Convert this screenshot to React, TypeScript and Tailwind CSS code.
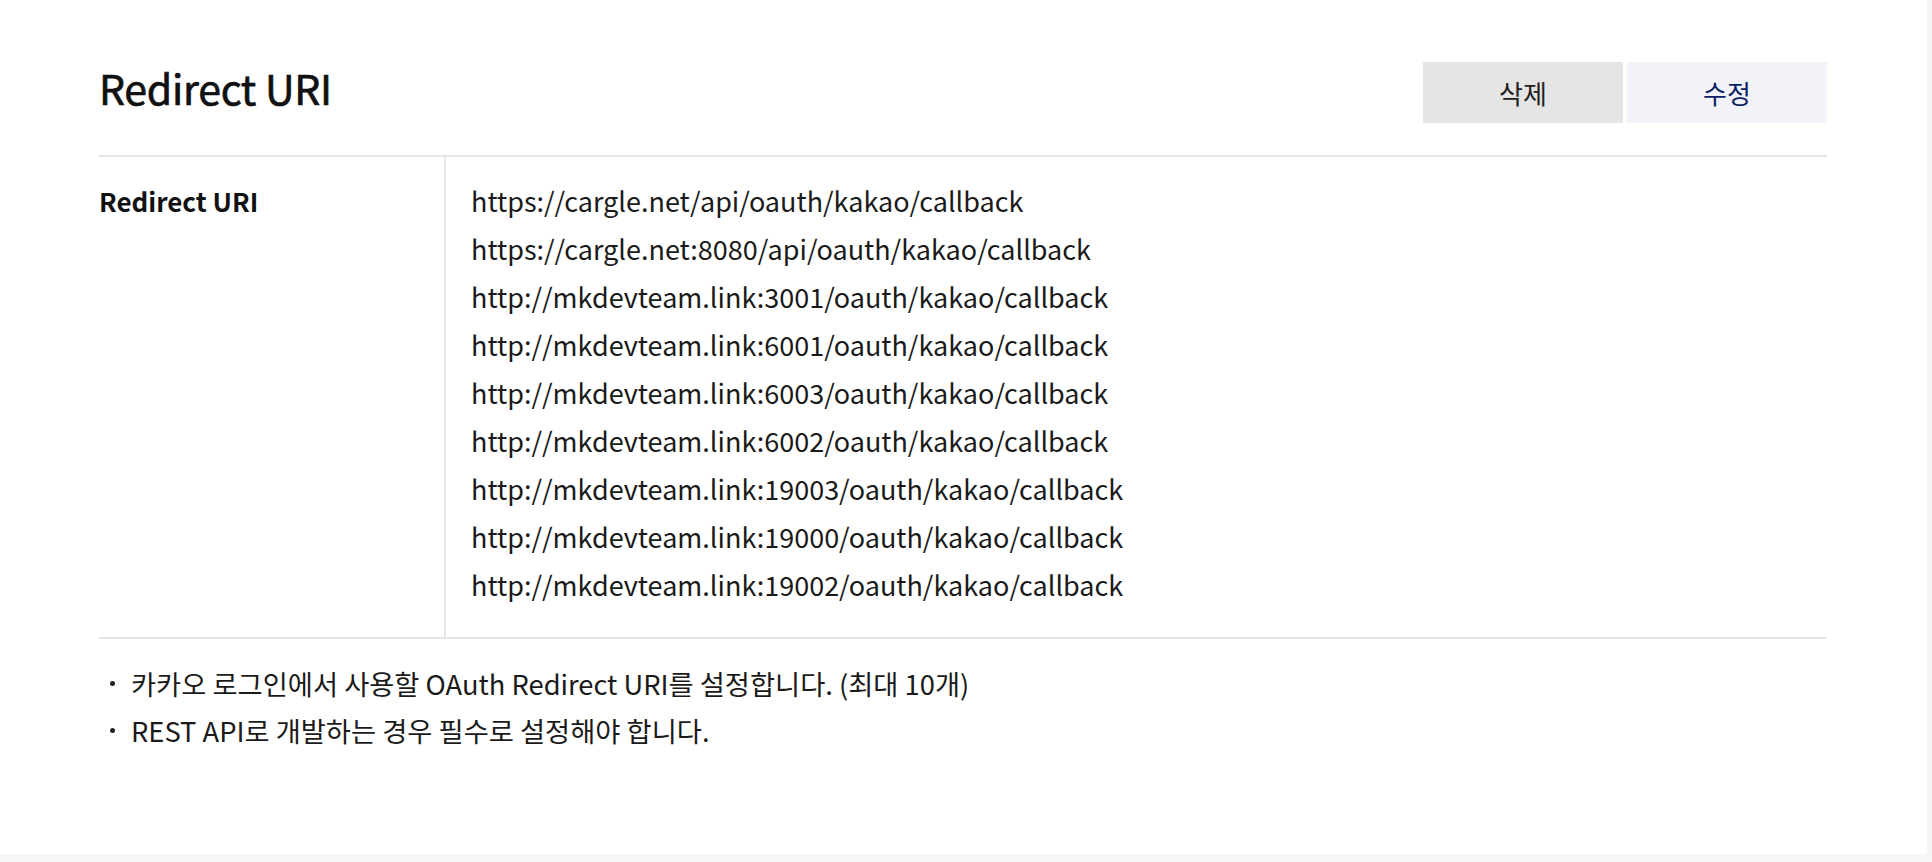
const uris = [
  'https://cargle.net/api/oauth/kakao/callback',
  'https://cargle.net:8080/api/oauth/kakao/callback',
  'http://mkdevteam.link:3001/oauth/kakao/callback',
  'http://mkdevteam.link:6001/oauth/kakao/callback',
  'http://mkdevteam.link:6003/oauth/kakao/callback',
  'http://mkdevteam.link:6002/oauth/kakao/callback',
  'http://mkdevteam.link:19003/oauth/kakao/callback',
  'http://mkdevteam.link:19000/oauth/kakao/callback',
  'http://mkdevteam.link:19002/oauth/kakao/callback',
];

const notes = [
  '카카오 로그인에서 사용할 OAuth Redirect URI를 설정합니다. (최대 10개)',
  'REST API로 개발하는 경우 필수로 설정해야 합니다.',
];

const App = () => {
  return (
    <div className="min-h-[862px] bg-[#f5f6f6] font-['Noto_Sans_CJK_KR','Noto_Sans',sans-serif] text-[#1a1a1a]">
      <div className="flex h-[854px]">
        <div className="flex-1 bg-white pl-[99px] pr-[100px] pt-[62px]">
          <div className="flex items-center justify-between">
            <h1 className="-mt-[10px] text-[41px] leading-none tracking-[-0.25px] text-[#111] [-webkit-text-stroke:0.7px_#111]">
              Redirect URI
            </h1>
            <div className="flex gap-[4px]">
              <button className="h-[61px] w-[200px] bg-[#e5e5e5] text-[26px] text-[#222]">삭제</button>
              <button className="h-[61px] w-[200px] bg-[#f2f3f8] text-[26px] text-[#0e1f66]">수정</button>
            </div>
          </div>

          <div className="mt-[32px] flex border-y-2 border-[#e6e6e6]">
            <div className="w-[347px] shrink-0 border-r-2 border-[#e6e6e6] pt-[20px] text-[26px] font-bold leading-[48px] text-[#111]">
              Redirect URI
            </div>
            <ul className="pb-[28px] pl-[25px] pt-[20px] text-[27px] leading-[48px] text-[#1a1a1a]">
              {uris.map((u) => (
                <li key={u}>{u}</li>
              ))}
            </ul>
          </div>

          <ul className="pt-[21px] text-[27.3px] leading-[47px] text-[#1a1a1a]">
            {notes.map((n) => (
              <li key={n} className="flex items-center">
                <span className="ml-[11px] mr-[16px] h-[5px] w-[5px] rounded-full bg-[#222]" />
                {n}
              </li>
            ))}
          </ul>
        </div>
        <div className="w-[5px] bg-[#f5f5f5]" />
      </div>
    </div>
  );
};

export default App;
